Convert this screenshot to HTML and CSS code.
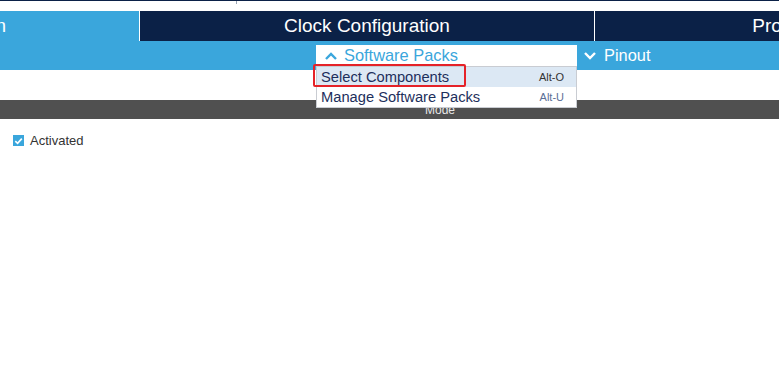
FILE: index.html
```html
<!DOCTYPE html>
<html lang="en">
<head>
    <meta charset="UTF-8">
    <title>Clock Configuration</title>
    <link rel="stylesheet" href="styles.css">
</head>
<body>
    <div class="top-strip"><span class="top-tick"></span></div>

    <div class="tabs">
        <div class="tab tab-pinout"><span>Pinout &amp; Configuration</span></div>
        <div class="tab tab-clock">Clock Configuration</div>
        <div class="tab tab-project">Project Manager</div>
    </div>

    <div class="subbar">
        <div class="pack-wrap">
            <div class="pack-btn">
                <svg class="chev" width="14" height="10" viewBox="0 0 14 10"><path d="M2 8 L7 3 L12 8" fill="none" stroke="#3aa6dc" stroke-width="2.4"/></svg>
                Software Packs
            </div>
            <div class="menu">
                <div class="menu-item active"><span>Select Components</span><span class="key">Alt-O</span></div>
                <div class="menu-item"><span>Manage Software Packs</span><span class="key key-blue">Alt-U</span></div>
            </div>
            <div class="mark"></div>
        </div>
        <div class="pinout">
            <svg class="chev" width="14" height="10" viewBox="0 0 14 10"><path d="M2 2 L7 7 L12 2" fill="none" stroke="#ffffff" stroke-width="2.4"/></svg>
            Pinout
        </div>
    </div>

    <div class="gap"></div>

    <div class="mode-bar">Mode</div>

    <div class="panel">
        <label class="check-row">
            <span class="check-box">
                <svg width="12" height="12" viewBox="0 0 12 12"><path d="M2.5 6.2 L5 8.6 L9.6 3.4" fill="none" stroke="#fff" stroke-width="1.8"/></svg>
            </span>
            Activated
        </label>
    </div>
</body>
</html>
```

FILE: styles.css
```css
body{
    margin:0;
    width:779px;
    height:388px;
    overflow:hidden;
    background:#fff;
    font-family:"Liberation Sans", Arial, sans-serif;
}

.top-strip{
    height:10px;
    border-top:1px solid #0b2147;
    position:relative;
}

.top-tick{
    position:absolute;
    left:236px;
    top:0;
    width:1px;
    height:3px;
    background:#9aa4b4;
}

.tabs{
    display:flex;
    height:30px;
    width:1300px;
}

.tab{
    height:30px;
    line-height:30px;
    font-size:19px;
    color:#fff;
    text-align:center;
    white-space:nowrap;
    overflow:hidden;
    flex:none;
}

.tab-pinout{
    width:139px;
    background:#3aa6dc;
    border-right:1px solid #fff;
    display:flex;
    justify-content:flex-end;
}

.tab-pinout span{
    margin-right:133px;
}

.tab-clock{
    width:454px;
    background:#0b2147;
    border-right:1px solid #fff;
}

.tab-project{
    width:454px;
    background:#0b2147;
}

.subbar{
    height:29px;
    background:#3aa6dc;
    display:flex;
    align-items:flex-start;
    padding-left:316px;
}

.pack-wrap{
    position:relative;
    margin-top:4px;
}

.pack-btn{
    width:253px;
    height:21px;
    background:#fff;
    color:#3aa6dc;
    font-size:16.4px;
    line-height:21px;
    padding-left:8px;
    display:flex;
    align-items:center;
    gap:6px;
}

.menu{
    position:absolute;
    left:0;
    top:21px;
    width:259px;
    background:#fff;
    border:1px solid #c9ccd2;
    z-index:2;
}

.menu-item{
    height:20px;
    display:flex;
    align-items:center;
    justify-content:space-between;
    padding:0 12px 0 4px;
    font-size:14.7px;
    color:#1d2f5c;
}

.menu-item.active{
    background:#dce8f4;
}

.key{
    font-size:11px;
    color:#333;
}

.key-blue{
    color:#5a6e96;
}

.mark{
    position:absolute;
    left:-3px;
    top:19px;
    width:149px;
    height:19px;
    border:2px solid #e52228;
    border-radius:2px;
    z-index:3;
}

.pinout{
    margin-top:4px;
    margin-left:6px;
    height:21px;
    color:#fff;
    font-size:16.4px;
    line-height:21px;
    display:flex;
    align-items:center;
    gap:7px;
}

.gap{
    height:30px;
}

.mode-bar{
    height:19px;
    background:#505050;
    color:#e8e8e8;
    font-size:12px;
    line-height:21px;
    padding-left:425px;
}

.panel{
    padding:14px 0 0 13px;
}

.check-row{
    display:flex;
    align-items:center;
    gap:6px;
    font-size:13px;
    color:#333;
}

.check-box{
    width:11px;
    height:11px;
    background:#3aa6dc;
    display:flex;
    align-items:center;
    justify-content:center;
}
```
